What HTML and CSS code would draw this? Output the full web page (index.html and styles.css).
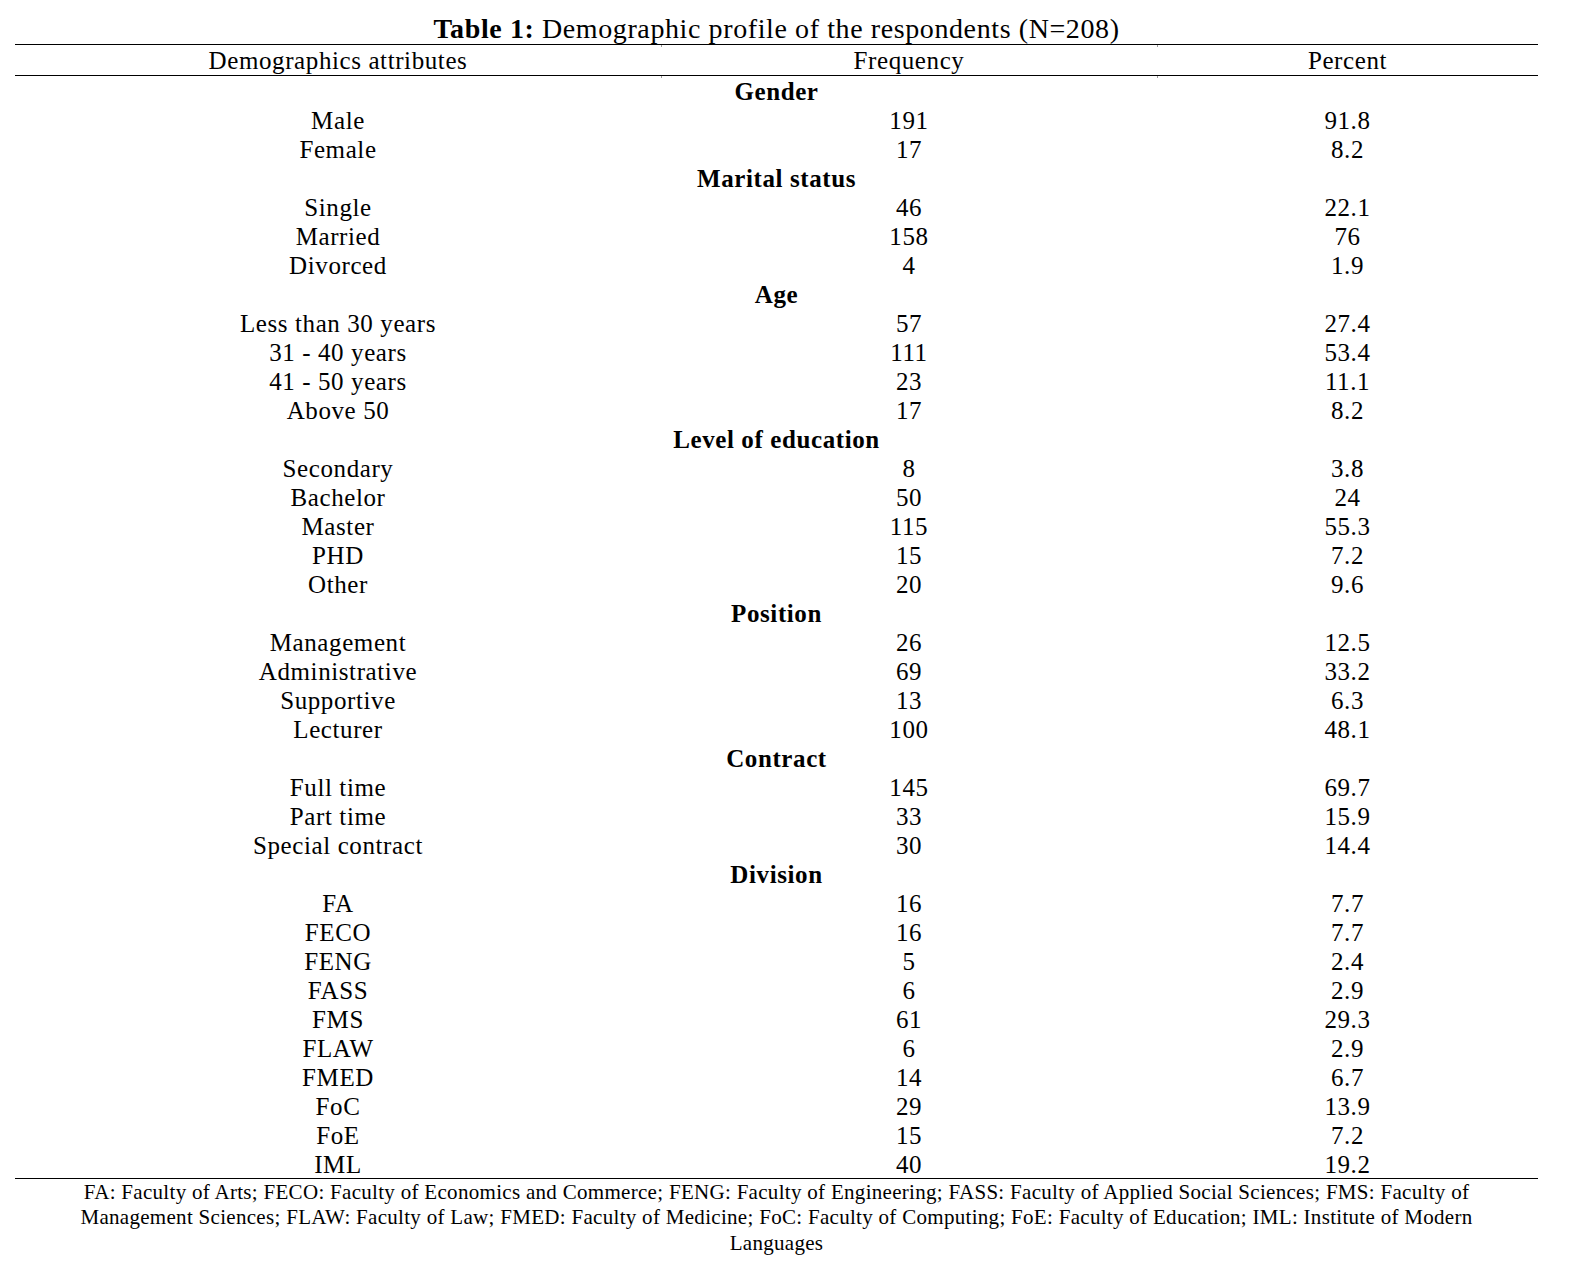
FILE: index.html
```html
<!DOCTYPE html>
<html lang="en">
<head>
<meta charset="utf-8">
<title>Table 1</title>
<link rel="stylesheet" href="styles.css">
</head>
<body>
<div class="page">
  <div class="caption"><b>Table 1:</b> Demographic profile of the respondents (N=208)</div>
  <table class="demo">
    <colgroup>
      <col class="c1"><col class="c2"><col class="c3">
    </colgroup>
    <thead>
      <tr><th>Demographics attributes</th><th class="tick">Frequency</th><th class="tick">Percent</th></tr>
    </thead>
    <tbody>
      <tr class="sec"><td colspan="3">Gender</td></tr>
      <tr><td>Male</td><td>191</td><td>91.8</td></tr>
      <tr><td>Female</td><td>17</td><td>8.2</td></tr>
      <tr class="sec"><td colspan="3">Marital status</td></tr>
      <tr><td>Single</td><td>46</td><td>22.1</td></tr>
      <tr><td>Married</td><td>158</td><td>76</td></tr>
      <tr><td>Divorced</td><td>4</td><td>1.9</td></tr>
      <tr class="sec"><td colspan="3">Age</td></tr>
      <tr><td>Less than 30 years</td><td>57</td><td>27.4</td></tr>
      <tr><td>31 - 40 years</td><td>111</td><td>53.4</td></tr>
      <tr><td>41 - 50 years</td><td>23</td><td>11.1</td></tr>
      <tr><td>Above 50</td><td>17</td><td>8.2</td></tr>
      <tr class="sec"><td colspan="3">Level of education</td></tr>
      <tr><td>Secondary</td><td>8</td><td>3.8</td></tr>
      <tr><td>Bachelor</td><td>50</td><td>24</td></tr>
      <tr><td>Master</td><td>115</td><td>55.3</td></tr>
      <tr><td>PHD</td><td>15</td><td>7.2</td></tr>
      <tr><td>Other</td><td>20</td><td>9.6</td></tr>
      <tr class="sec"><td colspan="3">Position</td></tr>
      <tr><td>Management</td><td>26</td><td>12.5</td></tr>
      <tr><td>Administrative</td><td>69</td><td>33.2</td></tr>
      <tr><td>Supportive</td><td>13</td><td>6.3</td></tr>
      <tr><td>Lecturer</td><td>100</td><td>48.1</td></tr>
      <tr class="sec"><td colspan="3">Contract</td></tr>
      <tr><td>Full time</td><td>145</td><td>69.7</td></tr>
      <tr><td>Part time</td><td>33</td><td>15.9</td></tr>
      <tr><td>Special contract</td><td>30</td><td>14.4</td></tr>
      <tr class="sec"><td colspan="3">Division</td></tr>
      <tr><td>FA</td><td>16</td><td>7.7</td></tr>
      <tr><td>FECO</td><td>16</td><td>7.7</td></tr>
      <tr><td>FENG</td><td>5</td><td>2.4</td></tr>
      <tr><td>FASS</td><td>6</td><td>2.9</td></tr>
      <tr><td>FMS</td><td>61</td><td>29.3</td></tr>
      <tr><td>FLAW</td><td>6</td><td>2.9</td></tr>
      <tr><td>FMED</td><td>14</td><td>6.7</td></tr>
      <tr><td>FoC</td><td>29</td><td>13.9</td></tr>
      <tr><td>FoE</td><td>15</td><td>7.2</td></tr>
      <tr class="last"><td>IML</td><td>40</td><td>19.2</td></tr>
    </tbody>
  </table>
  <p class="note">FA: Faculty of Arts; FECO: Faculty of Economics and Commerce; FENG: Faculty of Engineering; FASS: Faculty of Applied Social Sciences; FMS: Faculty of<br>Management Sciences; FLAW: Faculty of Law; FMED: Faculty of Medicine; FoC: Faculty of Computing; FoE: Faculty of Education; IML: Institute of Modern<br>Languages</p>
</div>
</body>
</html>
```

FILE: styles.css
```css
html, body {
  margin: 0;
  padding: 0;
  background: #ffffff;
}

body {
  font-family: "Liberation Serif", "Times New Roman", serif;
  color: #000000;
}

.page {
  width: 1523px;
  margin-left: 15px;
}

.caption {
  font-size: 28px;
  letter-spacing: 0.6px;
  line-height: 30px;
  padding-top: 14px;
  text-align: center;
  border-bottom: 1px solid #000;
  height: 30px;
  white-space: nowrap;
}

.demo {
  width: 1523px;
  border-collapse: collapse;
  table-layout: fixed;
  font-size: 25px;
  letter-spacing: 0.6px;
}

.c1 { width: 646px; }
.c2 { width: 496px; }
.c3 { width: 381px; }

.demo th {
  font-weight: normal;
  height: 28px;
  line-height: 28px;
  padding: 2px 0 0;
  text-align: center;
  border-bottom: 1px solid #000;
}

.demo th.tick {
  position: relative;
}

.demo th.tick::before,
.demo th.tick::after {
  content: "";
  position: absolute;
  left: 0;
  width: 1px;
  height: 2px;
  background: #9a9a9a;
}

.demo th.tick::before { top: 0; }
.demo th.tick::after { bottom: -3px; }

.demo td {
  height: 27px;
  line-height: 27px;
  padding: 2px 0 0;
  text-align: center;
  white-space: nowrap;
}

.demo tr.sec td {
  font-weight: bold;
}

.demo tr.last td {
  border-bottom: 1px solid #000;
}

.note {
  margin: 0;
  padding-top: 1px;
  font-size: 21px;
  letter-spacing: 0.3px;
  line-height: 25.3px;
  text-align: center;
  white-space: nowrap;
}
```
